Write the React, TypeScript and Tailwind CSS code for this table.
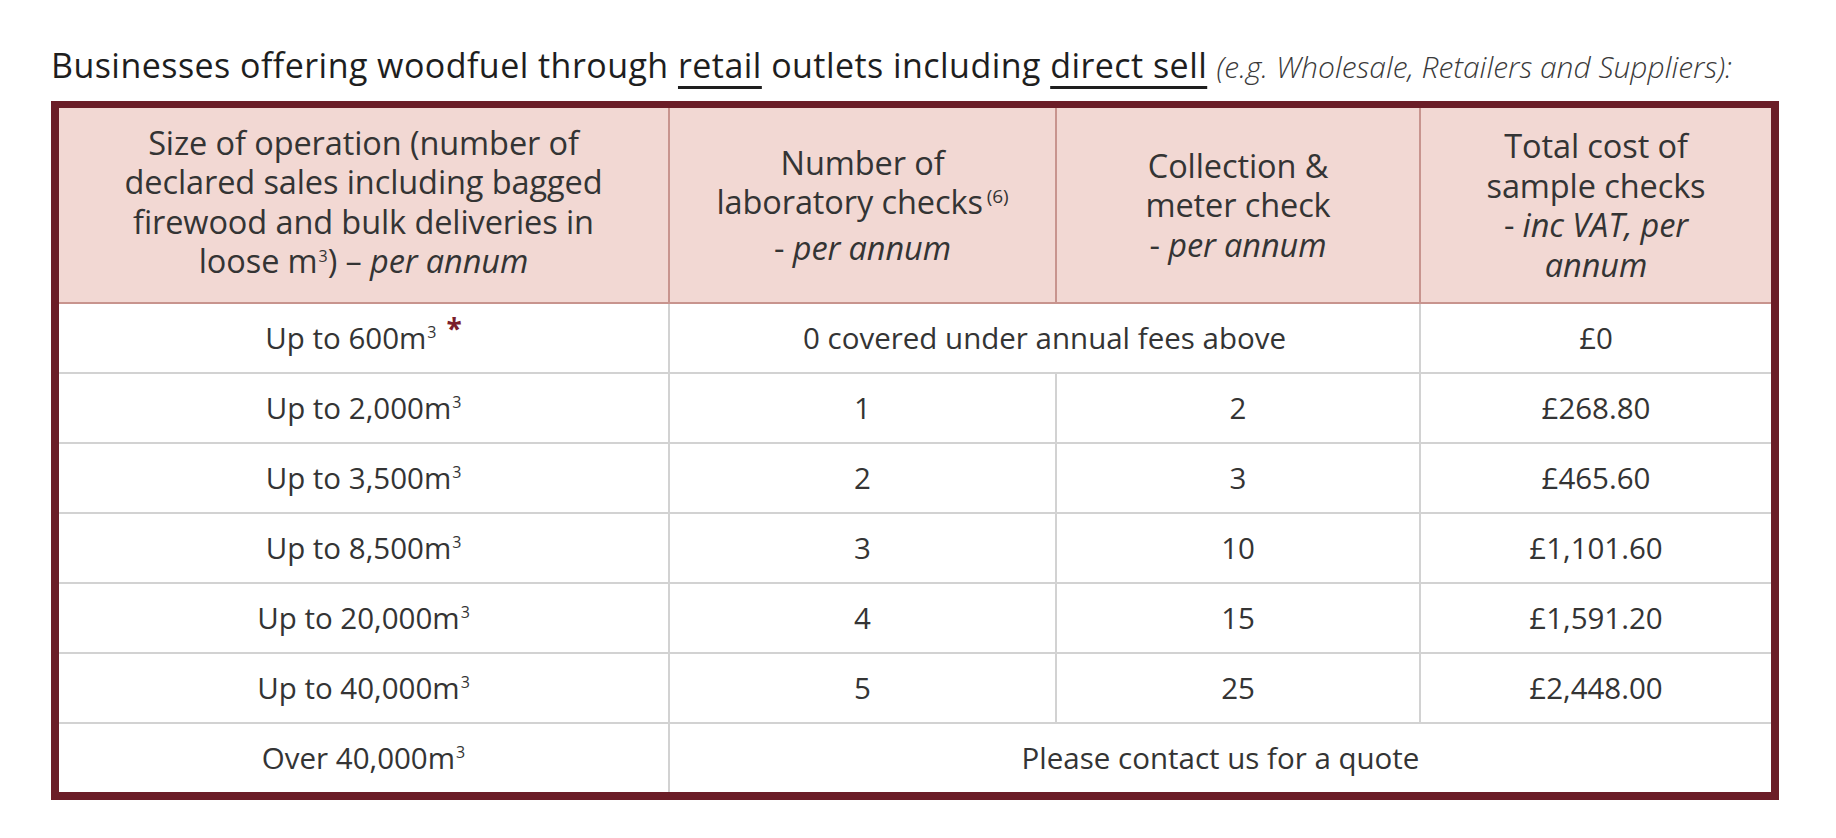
import React from "react";

type Row = {
  size: string;
  star?: boolean;
  lab?: string;
  meter?: string;
  total?: string;
  note?: string;
};

const rows: Row[] = [
  { size: "Up to 600m", star: true, note: "0 covered under annual fees above", total: "£0" },
  { size: "Up to 2,000m", lab: "1", meter: "2", total: "£268.80" },
  { size: "Up to 3,500m", lab: "2", meter: "3", total: "£465.60" },
  { size: "Up to 8,500m", lab: "3", meter: "10", total: "£1,101.60" },
  { size: "Up to 20,000m", lab: "4", meter: "15", total: "£1,591.20" },
  { size: "Up to 40,000m", lab: "5", meter: "25", total: "£2,448.00" },
  { size: "Over 40,000m", note: "Please contact us for a quote" },
];

const Cube = () => <span className="relative -top-[11px] text-[16px] ml-[1px]">3</span>;

const HeadCell = ({ children, last }: { children: React.ReactNode; last?: boolean }) => (
  <div
    className={`flex items-center justify-center text-center leading-[39.5px] ${
      last ? "" : "border-r-2 border-[#c8948e]"
    }`}
  >
    <div>{children}</div>
  </div>
);

const App = () => {
  return (
    <div
      className="min-h-screen bg-white pl-[51px] pt-[45px] text-[#343434]"
      style={{ fontFamily: "'Open Sans', Lato, sans-serif" }}
    >
      <h1 className="h-[40px] text-[34px] leading-[40px] font-medium tracking-[0.45px] text-[#1e1e1e] whitespace-nowrap">
        Businesses offering woodfuel through{" "}
        <span className="underline decoration-[3px] underline-offset-[8px]">retail</span> outlets including{" "}
        <span className="underline decoration-[3px] underline-offset-[8px]">direct sell</span>{" "}
        <span className="italic font-light text-[30px] tracking-[0px] text-[#3a3a3a]">
          (e.g. Wholesale, Retailers and Suppliers):
        </span>
      </h1>

      <div className="mt-[16px] w-[1728px] border-[8px] border-t-[7px] border-[#6b1d27] text-[29.5px]">
        <div className="grid grid-cols-[611px_387px_364px_350px] h-[196px] bg-[#f2d8d3] border-b-2 border-[#c8948e] text-[32.5px] tracking-[-0.1px]">
          <HeadCell>
            Size of operation (number of
            <br />
            declared sales including bagged
            <br />
            firewood and bulk deliveries in
            <br />
            loose m<Cube />) – <i>per annum</i>
          </HeadCell>
          <HeadCell>
            Number of
            <br />
            laboratory checks
            <span className="relative -top-[11px] ml-[4px] text-[19px]">(6)</span>
            <br />- <i>per annum</i>
          </HeadCell>
          <HeadCell>
            Collection &amp;
            <br />
            meter check
            <br />- <i>per annum</i>
          </HeadCell>
          <HeadCell last>
            Total cost of
            <br />
            sample checks
            <br />- <i>inc VAT, per</i>
            <br />
            <i>annum</i>
          </HeadCell>
        </div>

        {rows.map((r, i) => (
          <div
            key={r.size}
            className={`grid grid-cols-[611px_387px_364px_350px] ${
              i === rows.length - 1 ? "h-[68px]" : "h-[70px] border-b-2 border-[#d2d2d2]"
            }`}
          >
            <div className="flex items-center justify-center border-r-2 border-[#d2d2d2]">
              <span>
                {r.size}
                <Cube />
                {r.star && (
                  <span className="relative -top-[10px] ml-[10px] text-[28px] font-bold text-[#7b1e2b]">*</span>
                )}
              </span>
            </div>
            {r.note ? (
              <div
                className={`flex items-center justify-center ${
                  r.total ? "col-span-2 border-r-2 border-[#d2d2d2]" : "col-span-3"
                }`}
              >
                {r.note}
              </div>
            ) : (
              <>
                <div className="flex items-center justify-center border-r-2 border-[#d2d2d2]">{r.lab}</div>
                <div className="flex items-center justify-center border-r-2 border-[#d2d2d2]">{r.meter}</div>
              </>
            )}
            {r.total && <div className="flex items-center justify-center">{r.total}</div>}
          </div>
        ))}
      </div>
    </div>
  );
};

export default App;
